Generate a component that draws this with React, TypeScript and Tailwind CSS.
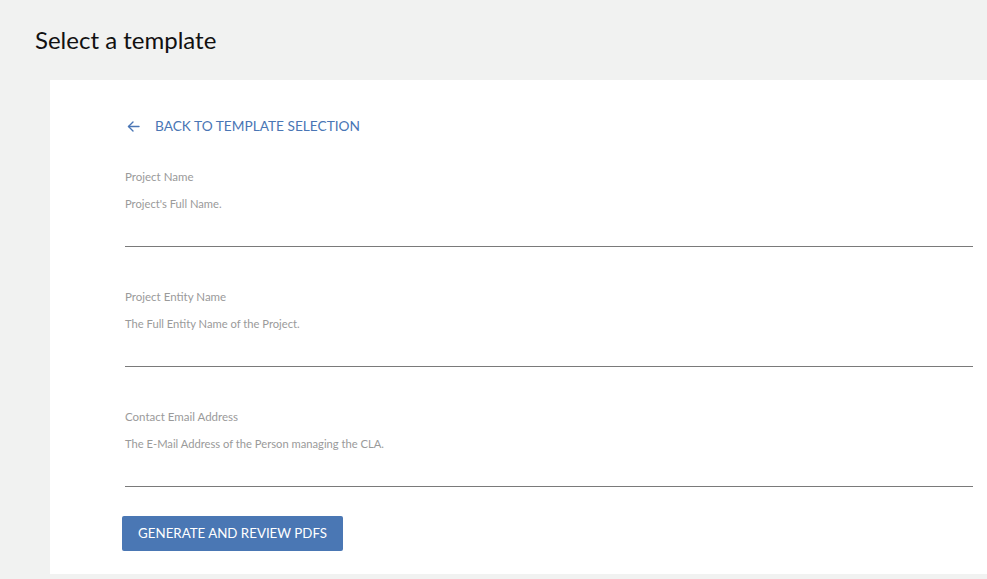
import React from "react";

const fields = [
  { label: "Project Name", desc: "Project's Full Name." },
  { label: "Project Entity Name", desc: "The Full Entity Name of the Project." },
  { label: "Contact Email Address", desc: "The E-Mail Address of the Person managing the CLA." },
];

export default function App() {
  return (
    <div
      className="min-h-[579px] w-full bg-[#f1f2f1] flex flex-col"
      style={{ fontFamily: "Lato, 'Open Sans', sans-serif" }}
    >
      <h1 className="pl-[35px] pt-[26px] h-[80px] text-[24px] leading-[28px] text-[#111]">
        Select a template
      </h1>
      <div className="ml-[50px] bg-white pl-[75px] pr-[14px] pt-[37px] pb-[23px]">
        <a className="flex items-center h-[18px] text-[#4a76b5] text-[13.7px] cursor-pointer">
          <svg width="13" height="13" viewBox="0 0 13 13" className="ml-[2px] mr-[15px]" fill="none" stroke="currentColor" strokeWidth="1.4" strokeLinecap="round" strokeLinejoin="round">
            <path d="M12 6.5H1.5" />
            <path d="M6 2L1.5 6.5 6 11" />
          </svg>
          <span>BACK TO TEMPLATE SELECTION</span>
        </a>
        <div className="mt-[34px] flex flex-col gap-[42px]">
          {fields.map((f) => (
            <div key={f.label} className="flex flex-col">
              <div className="h-[16px] leading-[16px] text-[11.5px] text-[#9a9a9a]">{f.label}</div>
              <div className="mt-[11px] h-[16px] leading-[16px] text-[11.2px] text-[#9a9a9a]">{f.desc}</div>
              <div className="h-[35px] border-b border-[#7a7a7a]"></div>
            </div>
          ))}
        </div>
        <button className="mt-[29px] -ml-[3px] h-[35px] w-[221px] rounded-[2px] bg-[#4a77b4] text-white text-[13.3px] tracking-normal">
          GENERATE AND REVIEW PDFS
        </button>
      </div>
    </div>
  );
}
